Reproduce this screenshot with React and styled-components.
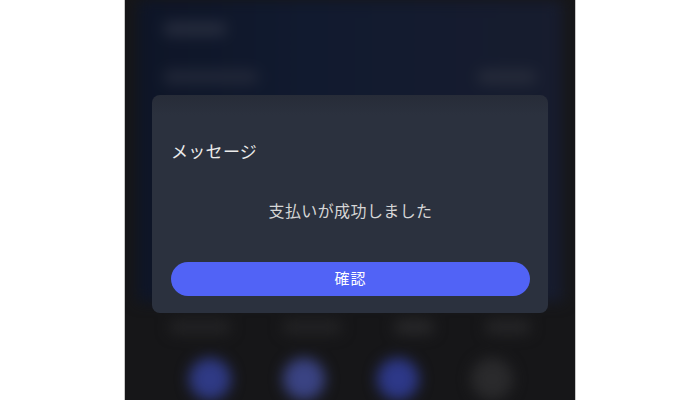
import React from 'react'
import styled, { createGlobalStyle } from 'styled-components'

const GlobalStyle = createGlobalStyle`
  html, body {
    margin: 0;
    padding: 0;
    background: #ffffff;
    font-family: 'Noto Sans CJK JP', 'Noto Sans', sans-serif;
  }
`

const Page = styled.div`
  width: 700px;
  height: 400px;
  display: flex;
  justify-content: center;
  overflow: hidden;
`

const Phone = styled.div`
  position: relative;
  width: 452px;
  height: 400px;
  background: #161618;
  border-left: 1px solid #c8c8c8;
  border-right: 1px solid #c8c8c8;
  box-sizing: border-box;
  overflow: hidden;
`

const Backdrop = styled.div`
  height: 100%;
  display: flex;
  flex-direction: column;
  filter: blur(7px);
`

const Header = styled.div`
  height: 305px;
  margin: 0 12px;
  background: linear-gradient(90deg, #0e1527 0%, #111a2f 40%, #171c2e 100%);
  display: flex;
  flex-direction: column;
  padding: 22px 26px 0;
  box-sizing: border-box;
`

const HeaderRow = styled.div`
  display: flex;
  justify-content: space-between;
  align-items: center;
  height: 14px;
  margin-bottom: ${p => p.gap || 0}px;
`

const Blob = styled.div`
  width: ${p => p.w}px;
  height: ${p => p.h || 14}px;
  border-radius: 7px;
  background: ${p => p.color || '#2a3042'};
`

const Footer = styled.div`
  flex: 1;
  display: flex;
  flex-direction: column;
  padding: 18px 40px 0;
  gap: 24px;
`

const LabelRow = styled.div`
  display: flex;
  justify-content: space-between;
  padding: 0 4px;
`

const IconRow = styled.div`
  display: flex;
  justify-content: space-between;
  padding: 0 22px 0 24px;
`

const Dot = styled.div`
  width: 42px;
  height: 42px;
  border-radius: 50%;
  background: ${p => p.color};
`

const Modal = styled.div`
  position: absolute;
  top: 95px;
  left: 27px;
  width: 396px;
  height: 218px;
  border-radius: 8px;
  background: linear-gradient(180deg, #272c38 0px, #2b313e 20px, #2b313e 100%);
  display: flex;
  flex-direction: column;
  padding: 0 18px 17px 19px;
  box-sizing: border-box;
`

const Title = styled.div`
  margin-top: 44px;
  font-size: 17px;
  line-height: 24px;
  color: #ececec;
  letter-spacing: 0.3px;
`

const Message = styled.div`
  margin-top: 36px;
  text-align: center;
  font-size: 16px;
  line-height: 22px;
  color: #d6d6d6;
  letter-spacing: 0.4px;
`

const ConfirmButton = styled.button`
  margin-top: auto;
  height: 34px;
  width: 100%;
  padding: 0 0 3px;
  border: none;
  border-radius: 17px;
  background: #5163f6;
  color: #ffffff;
  font-family: inherit;
  font-size: 15px;
  line-height: 20px;
  letter-spacing: 1px;
  cursor: pointer;
`

export default function App() {
  return (
    <>
      <GlobalStyle />
      <Page>
        <Phone>
          <Backdrop>
            <Header>
              <HeaderRow gap={34}>
                <Blob w={64} color="#262c3d" />
              </HeaderRow>
              <HeaderRow>
                <Blob w={96} color="#212738" />
                <Blob w={60} color="#262b3a" />
              </HeaderRow>
            </Header>
            <Footer>
              <LabelRow>
                <Blob w={62} color="#232325" />
                <Blob w={60} color="#232325" />
                <Blob w={40} color="#29292b" />
                <Blob w={46} color="#262628" />
              </LabelRow>
              <IconRow>
                <Dot color="#2f3a85" />
                <Dot color="#3a4383" />
                <Dot color="#2d3888" />
                <Dot color="#2a2a2c" />
              </IconRow>
            </Footer>
          </Backdrop>
          <Modal>
            <Title>メッセージ</Title>
            <Message>支払いが成功しました</Message>
            <ConfirmButton>確認</ConfirmButton>
          </Modal>
        </Phone>
      </Page>
    </>
  )
}
